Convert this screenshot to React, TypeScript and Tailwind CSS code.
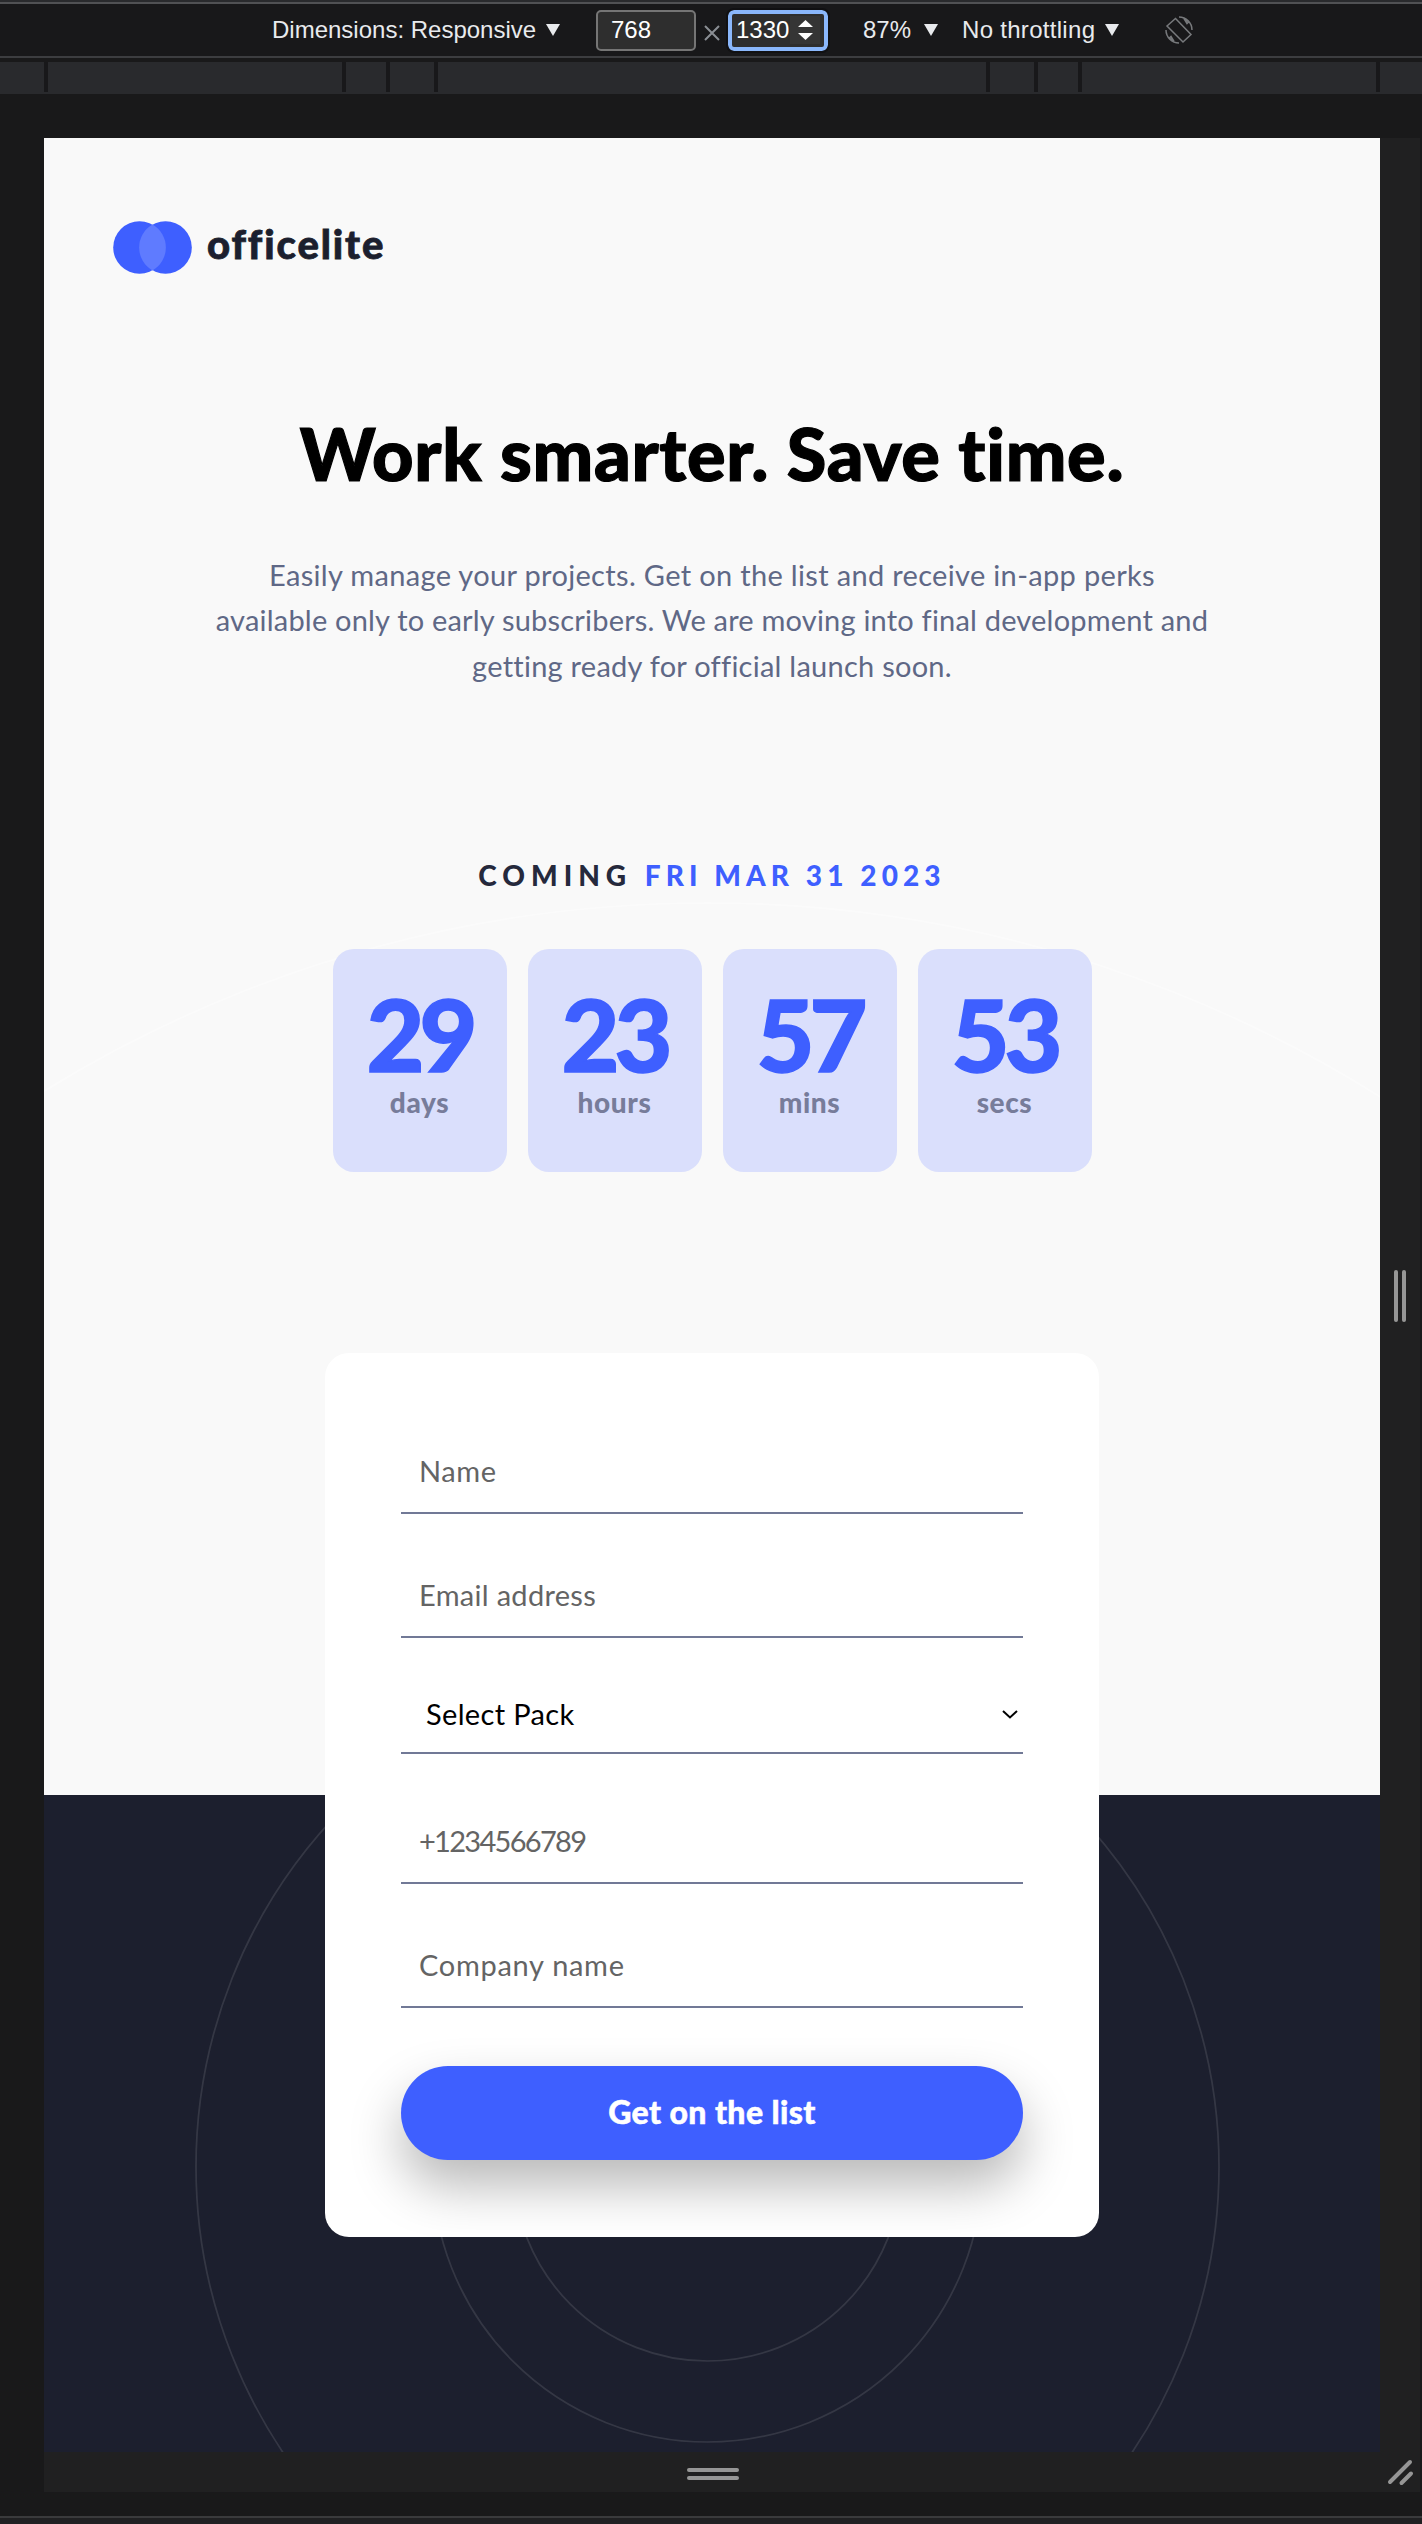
import type { ReactNode } from "react";

function Caret() {
  return (
    <svg width="14" height="12" viewBox="0 0 14 12" className="shrink-0">
      <path d="M0 0H14L7 12Z" fill="#e8eaed" />
    </svg>
  );
}

function Toolbar() {
  return (
    <div className="flex h-[52px] items-start whitespace-nowrap bg-[#18181a] font-['Liberation_Sans',sans-serif] text-[24px] leading-[52px] text-[#e8eaed]">
      <span className="ml-[272px] w-[274px]">Dimensions: Responsive</span>
      <span className="pt-5">
        <Caret />
      </span>
      <div className="ml-[36px] mt-[6px] h-[41px] w-[100px] rounded-[5px] border-2 border-[#757575] bg-[#2e2e2e] pl-[13px] leading-[36px] text-white">
        768
      </div>
      <svg width="16" height="16" viewBox="0 0 16 16" className="ml-[8px] mt-[21px] shrink-0">
        <path d="M1 1L15 15M15 1L1 15" stroke="#8a8e94" strokeWidth="2" />
      </svg>
      <div className="ml-[8px] mt-[6px] flex h-[41px] w-[100px] rounded-[6px] border-4 border-[#8ab7fb] bg-[#2e2e2e] leading-[32px] text-white outline-2 outline-[#111113]">
        <span className="ml-[4px] w-[54px]">1330</span>
        <span className="mt-[2px] flex h-[28px] w-[30px] flex-col items-center gap-[6px] bg-[#353535] pt-[4px]">
          <svg width="15" height="7" viewBox="0 0 15 7">
            <path d="M7.500 0L15 7H0Z" fill="white" />
          </svg>
          <svg width="15" height="7" viewBox="0 0 15 7">
            <path d="M0 0H15L7.500 7Z" fill="white" />
          </svg>
        </span>
      </div>
      <span className="ml-[35px] w-[61px]">87%</span>
      <span className="pt-5">
        <Caret />
      </span>
      <span className="ml-[24px] w-[143px] tracking-[0.3px]">No throttling</span>
      <span className="pt-5">
        <Caret />
      </span>
      <svg width="28" height="28" viewBox="0 0 28 28" fill="none" stroke="#77797c" strokeWidth="1.500" className="ml-[46px] mt-[12px] shrink-0">
        <path d="M10.500 2.500L26 18.500L18 26L2 10Z" />
        <path d="M14 1A13 13 0 0 1 27 14M19 2.500L23.500 6L22 7.500ZM1 14A13 13 0 0 0 14 27M9 25.500L4.500 22L6 20.500Z" />
      </svg>
    </div>
  );
}

function Ruler() {
  return (
    <div className="flex h-[32px] gap-[4px] border-b-2 border-[#292a2d] bg-[#18181a] [&>i]:bg-[#292a2d]">
      <i className="w-[44px]" />
      <i className="w-[294px]" />
      <i className="w-[40px]" />
      <i className="w-[44px]" />
      <i className="w-[548px]" />
      <i className="w-[44px]" />
      <i className="w-[40px]" />
      <i className="w-[294px]" />
      <i className="flex-1" />
    </div>
  );
}

function Backdrop() {
  return (
    <div className="absolute inset-0 flex flex-col justify-end">
      <div className="h-[657.5px] bg-[#1c1f2e]" />
      <svg
        width="1336"
        height="2314"
        viewBox="0 0 1336 2314"
        fill="none"
        stroke="white"
        strokeOpacity="0.11"
        strokeWidth="1.740"
        className="absolute inset-0"
      >
        <circle cx="663.500" cy="2029" r="194" />
        <circle cx="663.500" cy="2029" r="275" />
        <circle cx="663.500" cy="2029" r="511.500" />
        <circle cx="663.500" cy="2029" r="1264" strokeOpacity="0.4" />
      </svg>
    </div>
  );
}

function TimeBox({ value, label }: { value: string; label: string }) {
  return (
    <div className="flex h-[223px] w-[174px] flex-col items-center rounded-[21px] bg-[#dadffc] pt-[34px] font-black">
      <span className="text-[100px] leading-[100px] tracking-[-5px] text-[#3e5fff] [-webkit-text-stroke:1.5px_#3e5fff]">
        {value}
      </span>
      <span className="mt-[3px] text-[28px] leading-[32px] tracking-[0.6px] text-[#777c9a]">{label}</span>
    </div>
  );
}

function Field({ className, children }: { className: string; children: ReactNode }) {
  return (
    <div className={`flex h-[70px] border-b-2 border-[#717996] text-[29px] leading-[53px] ${className}`}>
      {children}
    </div>
  );
}

function SignupForm() {
  return (
    <form className="mt-[181px] flex h-[883.5px] w-[774px] flex-col rounded-[24px] bg-white px-[76px] pt-[91px] text-[#646464]">
      <Field className="pl-[18px] tracking-[0.6px]">Name</Field>
      <Field className="mt-[54px] pl-[18px] tracking-[0.3px]">Email address</Field>
      <Field className="mt-[46px] items-start justify-between pl-[25px] pr-[5px] pt-[3px] tracking-[0.35px] text-black">
        Select Pack
        <svg width="16" height="9" viewBox="0 0 16 9" fill="none" className="mt-[23px]">
          <path d="M1 1L8 7.500L15 1" stroke="black" strokeWidth="2" />
        </svg>
      </Field>
      <Field className="mt-[60px] pl-[18px] tracking-[-1.7px]">+1234566789</Field>
      <Field className="mt-[54px] pl-[18px] tracking-[0.7px]">Company name</Field>
      <button
        type="button"
        className="mt-[58px] h-[94px] rounded-full bg-[#3e5fff] pb-[2px] text-[32px] font-black leading-[92px] tracking-[0.4px] text-white shadow-[0_26px_52px_rgba(0,0,0,0.28)] [-webkit-text-stroke:0.5px_white]"
      >
        Get on the list
      </button>
    </form>
  );
}

function Page() {
  return (
    <main className="relative h-[2314px] w-[1336px] overflow-hidden bg-[#f9f9f9] font-[Lato,sans-serif]">
      <Backdrop />
      <div className="relative flex flex-col items-center">
        <div className="flex h-[136px] w-full items-start gap-[15px] pl-[69px] pt-[83px]">
          <svg width="79" height="53" viewBox="0 0 79 53">
            <circle cx="26.500" cy="26.500" r="26.300" fill="#3e5fff" />
            <circle cx="52.500" cy="26.500" r="26.300" fill="#3e5fff" />
            <path d="M39.500 3.600A26.300 26.300 0 0 1 39.500 49.400A26.300 26.300 0 0 1 39.500 3.600Z" fill="#5f7bff" />
          </svg>
          <span className="text-[40px] font-black leading-[46px] tracking-[1.9px] text-[#1c1f2e] [-webkit-text-stroke:0.8px_#1c1f2e]">
            officelite
          </span>
        </div>
        <h1 className="mt-[143px] whitespace-nowrap text-[72px] font-black leading-[72px] tracking-[0.7px] text-black [-webkit-text-stroke:1.2px_black]">
          Work smarter. Save time.
        </h1>
        <p className="mt-[62.5px] whitespace-nowrap text-center text-[29px] leading-[45.5px] tracking-[0.25px] text-[#5f6886]">
          <span className="tracking-[0.33px]">Easily manage your projects. Get on the list and receive in-app perks</span>
          <br />
          <span className="tracking-[0.2px]">
            available only to early subscribers. We are moving into final development and
          </span>
          <br />
          getting ready for official launch soon.
        </p>
        <h2 className="mt-[167px] whitespace-pre text-[28px] font-black leading-[40px] tracking-[6px] text-[#25293c]">
          COMING <span className="tracking-[5.1px] text-[#3e5fff]">FRI MAR 31 2023</span>
        </h2>
        <div className="mt-[54px] flex gap-[21px]">
          <TimeBox value="29" label="days" />
          <TimeBox value="23" label="hours" />
          <TimeBox value="57" label="mins" />
          <TimeBox value="53" label="secs" />
        </div>
        <SignupForm />
      </div>
    </main>
  );
}

export default function App() {
  return (
    <div className="flex h-[2524px] w-[1422px] flex-col overflow-hidden bg-[#19191a]">
      <div className="h-[4px] shrink-0 border-b-2 border-[#505154] bg-[#292a2d]" />
      <Toolbar />
      <div className="mb-[4px] h-[2px] shrink-0 bg-[#3c3d40]" />
      <Ruler />
      <div className="ml-[44px] mt-[44px] grid w-[1376px] grid-cols-[1336px_40px] grid-rows-[2314px_40px] bg-[#202021]">
        <Page />
        <div className="flex items-center justify-center gap-[4px] pt-[2px]">
          <i className="h-[52px] w-[4px] rounded-full bg-[#969696]" />
          <i className="h-[52px] w-[4px] rounded-full bg-[#969696]" />
        </div>
        <div className="flex flex-col items-center justify-center gap-[4px] pl-[2px] pt-[4px]">
          <i className="h-[4px] w-[52px] rounded-full bg-[#969696]" />
          <i className="h-[4px] w-[52px] rounded-full bg-[#969696]" />
        </div>
        <svg width="40" height="40" viewBox="0 0 40 40" stroke="#969696" strokeWidth="4" strokeLinecap="round">
          <path d="M10 30L30 10M21.500 31L31 21.500" />
        </svg>
      </div>
      <div className="mt-[24px] h-[8px] border-t-2 border-[#3a3a3c] bg-[#202022]" />
    </div>
  );
}
